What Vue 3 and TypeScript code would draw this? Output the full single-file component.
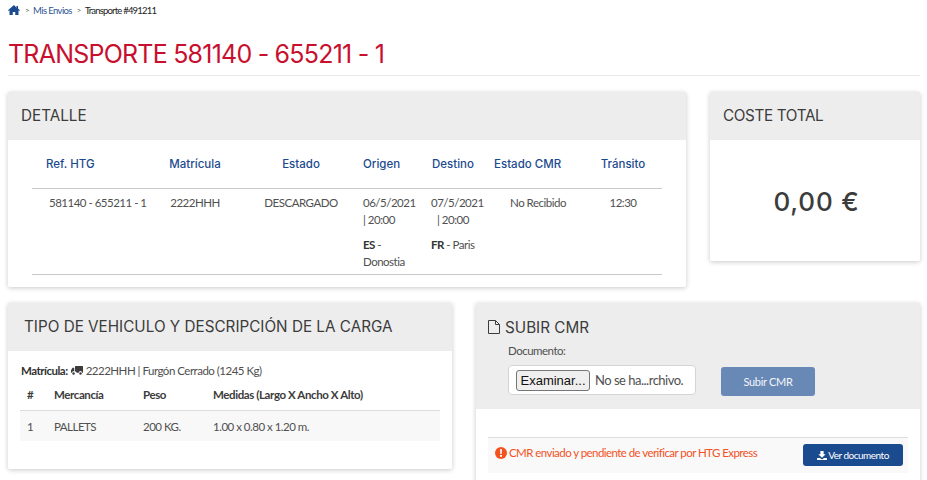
<template>
  <div class="page">
    <nav class="crumbs">
      <svg class="home" viewBox="0 0 24 20" width="12" height="10"><path d="M12 0 0 10.5l1.3 1.5L3 10.6V20h6.5v-6h5v6H21v-9.4l1.7 1.4 1.3-1.5-4-3.500V2h-3v3.400z" fill="#1b4b8f"/></svg>
      <span class="sep">&gt;</span>
      <a class="crumb-link">Mis Envios</a>
      <span class="sep">&gt;</span>
      <span class="crumb-current">Transporte #491211</span>
    </nav>

    <h1 class="title">TRANSPORTE 581140 - 655211 - 1</h1>

    <div class="row row-top">
      <section class="card">
        <header class="card-head"><h2>DETALLE</h2></header>
        <div class="detail-body">
          <table class="detail">
            <colgroup>
              <col v-for="w in detailCols" :key="w" :style="{ width: w + 'px' }" />
            </colgroup>
            <thead>
              <tr>
                <th class="th-ref">Ref. HTG</th>
                <th>Matrícula</th>
                <th>Estado</th>
                <th class="th-origin">Origen</th>
                <th class="th-dest">Destino</th>
                <th class="th-cmr">Estado CMR</th>
                <th>Tránsito</th>
              </tr>
            </thead>
            <tbody>
              <tr>
                <td class="td-ref">581140 - 655211 - 1</td>
                <td>2222HHH</td>
                <td>DESCARGADO</td>
                <td class="td-place">
                  <div>06/5/2021</div>
                  <div>| 20:00</div>
                  <div class="place"><b>ES</b> -<br />Donostia</div>
                </td>
                <td class="td-place td-dest">
                  <div>07/5/2021</div>
                  <div class="time-dest">| 20:00</div>
                  <div class="place"><b>FR</b> - Paris</div>
                </td>
                <td>No Recibido</td>
                <td>12:30</td>
              </tr>
            </tbody>
          </table>
        </div>
      </section>

      <section class="card card-total">
        <header class="card-head head-total"><h2>COSTE TOTAL</h2></header>
        <div class="total">0,00 €</div>
      </section>
    </div>

    <div class="row row-bottom">
      <section class="card card-cargo">
        <header class="card-head head-wide"><h2>TIPO DE VEHICULO Y DESCRIPCIÓN DE LA CARGA</h2></header>
        <div class="cargo-body">
          <p class="vehicle">
            <b>Matrícula:</b>
            <svg class="truck" viewBox="0 0 24 18" width="12" height="9"><path d="M9 0h14a1 1 0 0 1 1 1v12.500h-1.600a3.400 3.400 0 0 0-6.800 0h-4.200A3.400 3.400 0 0 0 8 11V1a1 1 0 0 1 1-1zM6.500 3.500V11a3.400 3.400 0 0 0-5 2.500H0V8.500l3-5z" fill="#3c3c3c"/><circle cx="5" cy="15" r="2.500" fill="#3c3c3c"/><circle cx="19" cy="15" r="2.500" fill="#3c3c3c"/></svg>
            <span>2222HHH | Furgón Cerrado (1245 Kg)</span>
          </p>
          <table class="cargo">
            <colgroup>
              <col v-for="w in cargoCols" :key="w" :style="{ width: w + 'px' }" />
            </colgroup>
            <thead>
              <tr><th>#</th><th>Mercancía</th><th>Peso</th><th>Medidas (Largo X Ancho X Alto)</th></tr>
            </thead>
            <tbody>
              <tr><td>1</td><td>PALLETS</td><td>200 KG.</td><td>1.00 x 0.80 x 1.20 m.</td></tr>
            </tbody>
          </table>
        </div>
      </section>

      <section class="card card-upload">
        <header class="upload-head">
          <h2>
            <svg class="file" viewBox="0 0 12 14" width="12" height="14"><path d="M.5.5h7l4 4v9H.5zM7.500.5v4h4" fill="none" stroke="#3c3c3c" stroke-width="1"/></svg>
            SUBIR CMR
          </h2>
          <label class="doc-label">Documento:</label>
          <div class="upload-row">
            <div class="file-box">
              <button class="browse" type="button">Examinar...</button>
              <span class="file-name">No se ha...rchivo.</span>
            </div>
            <button class="submit" type="button">Subir CMR</button>
          </div>
        </header>
        <div class="upload-body">
          <div class="status">
            <span class="status-text">
              <svg class="alert" viewBox="0 0 12 12" width="12" height="12"><circle cx="6" cy="6" r="6" fill="#f4511e"/><path d="M5 2.300h2l-.3 4.700H5.300zM5 8h2v1.800H5z" fill="#fff"/></svg>
              CMR enviado y pendiente de verificar por HTG Express
            </span>
            <button class="view" type="button">
              <svg viewBox="0 0 12 11" width="10" height="9"><path d="M4 0h4v4h2.500L6 8.200 1.500 4H4zM0 8.500h3.500L6 10.500l2.500-2H12V11H0z" fill="#fff"/></svg>
              Ver documento
            </button>
          </div>
        </div>
      </section>
    </div>
  </div>
</template>

<script setup lang="ts">
// anchos de columna de las dos tablas
const detailCols: number[] = [110, 106, 106, 69, 69, 92, 78];
const cargoCols: number[] = [27, 89, 70, 234];
</script>

<style>
html,
body {
  overflow: hidden;
  background: #fff;
}
</style>

<style scoped>
.page {
  width: 912px;
  padding: 0 7px 0 8px;
  font-family: "Lato", "Liberation Sans", sans-serif;
  font-size: 11.500px;
  letter-spacing: -0.5px;
  color: #505050;
}

.crumbs {
  display: flex;
  align-items: center;
  height: 20px;
  font-size: 9.500px;
  letter-spacing: -0.6px;
  color: #222;
}

.home {
  margin-right: 5px;
}

.sep {
  margin: 0 4px 0 0;
  font-size: 8px;
  color: #555;
}

.crumb-link {
  margin-right: 5px;
  color: #2f5597;
}

.crumb-current {
  letter-spacing: -0.8px;
}

.title {
  margin: 21px 0 0;
  padding-bottom: 7px;
  border-bottom: 1px solid #e8e8e8;
  font-family: "Inter", "Liberation Sans", sans-serif;
  font-size: 25px;
  line-height: 27px;
  font-weight: 400;
  letter-spacing: -0.78px;
  color: #c8102e;
}

.row {
  display: grid;
  column-gap: 24px;
  align-items: start;
}

.row-top {
  grid-template-columns: 678px 210px;
  margin-top: 16px;
}

.row-bottom {
  grid-template-columns: 444px 444px;
  margin-top: 16px;
}

.card {
  background: #fff;
  box-shadow: 0 1px 5px rgba(0, 0, 0, 0.22);
  border-radius: 2px;
}

.card-head {
  display: flex;
  align-items: center;
  height: 48px;
  box-sizing: border-box;
  padding: 0 13px 1px;
  background: #ededed;
}

.head-wide {
  padding: 0 16px 1px;
}

h2 {
  margin: 0;
  font-family: "Inter", "Liberation Sans", sans-serif;
  font-size: 15.250px;
  font-weight: 400;
  letter-spacing: 0;
  color: #3c3c3c;
}

.head-total h2 {
  letter-spacing: -0.35px;
}

.detail-body {
  padding: 0 24px 12px;
}

table {
  border-collapse: collapse;
  table-layout: fixed;
}

.detail {
  width: 630px;
}

.detail th {
  height: 48px;
  padding: 0;
  font-family: "Inter", "Liberation Sans", sans-serif;
  font-size: 11.500px;
  font-weight: 500;
  letter-spacing: 0;
  color: #1b4b8f;
  text-align: center;
  border-bottom: 1px solid #c9c9c9;
}

.detail .th-ref {
  padding-left: 14px;
  text-align: left;
}

.detail .th-origin {
  padding-left: 9px;
  text-align: left;
}

.detail .th-dest {
  padding-left: 9px;
  text-align: left;
}

.detail .th-cmr {
  padding-left: 2px;
  text-align: left;
}

.detail td {
  height: 80px;
  padding: 5px 0 0;
  line-height: 17px;
  text-align: center;
  vertical-align: top;
  border-bottom: 1px solid #c9c9c9;
}

.detail .td-ref {
  padding-left: 17px;
  text-align: left;
  white-space: nowrap;
}

.detail .td-place {
  padding-left: 9px;
  text-align: left;
}

.detail .td-dest {
  padding-left: 8px;
}

.time-dest {
  padding-left: 6px;
}

.place {
  margin-top: 8px;
}

.place b {
  color: #333;
}

.card-total {
  height: 169px;
}

.total {
  display: flex;
  justify-content: center;
  padding: 48px 0 0 3px;
  font-family: "Inter", "Liberation Sans", sans-serif;
  font-size: 26px;
  line-height: 28px;
  font-weight: 500;
  letter-spacing: 0.8px;
  color: #3c3c3c;
}

.card-cargo {
  height: 166px;
}

.cargo-body {
  padding: 11px 12px 0;
}

.vehicle {
  display: flex;
  align-items: center;
  gap: 3px;
  margin: 0;
  padding-left: 1px;
  height: 16px;
  white-space: pre;
}

.vehicle b {
  color: #333;
}

.cargo {
  width: 420px;
}

.cargo th {
  height: 32px;
  padding: 0 0 0 7px;
  font-weight: 700;
  letter-spacing: -0.4px;
  text-align: left;
  color: #3c3c3c;
  border-bottom: 1px solid #dcdcdc;
}

.cargo td {
  height: 30px;
  padding: 0 0 0 7px;
  background: #f8f8f8;
}

.card-upload {
  min-height: 190px;
}

.upload-head {
  height: 106px;
  box-sizing: border-box;
  padding: 14px 12px 0;
  background: #ededed;
}

.upload-head h2 {
  display: flex;
  align-items: center;
  gap: 5px;
  height: 20px;
}

.doc-label {
  display: block;
  margin: 6px 0 0 20px;
  line-height: 16px;
}

.upload-row {
  display: flex;
  align-items: flex-start;
  margin: 6px 0 0 20px;
}

.file-box {
  display: flex;
  align-items: center;
  width: 188px;
  height: 30px;
  box-sizing: border-box;
  padding-left: 7px;
  background: #fff;
  border: 1px solid #d4d4d4;
  border-radius: 4px;
  font-size: 13px;
}

.browse {
  width: 74px;
  height: 21px;
  padding: 0;
  background: #efefef;
  border: 1px solid #767676;
  border-radius: 3px;
  font-family: "Liberation Sans", sans-serif;
  font-size: 13px;
  color: #111;
}

.file-name {
  margin-left: 5px;
  white-space: nowrap;
}

.submit {
  width: 94px;
  height: 29px;
  margin: 2px 0 0 25px;
  padding: 0;
  background: #6888b5;
  border: 0;
  border-radius: 3px;
  font-family: inherit;
  font-size: 11px;
  letter-spacing: -0.3px;
  color: #f4f6fa;
}

.upload-body {
  padding: 28px 12px 0;
}

.status {
  display: flex;
  align-items: flex-start;
  justify-content: space-between;
  height: 36px;
  box-sizing: border-box;
  padding: 6px 5px 0 7px;
  background: #f9f9f9;
  border-top: 1px solid #dddddd;
}

.status-text {
  display: flex;
  align-items: center;
  gap: 2px;
  height: 17px;
  letter-spacing: -0.56px;
  color: #f4511e;
}

.view {
  display: flex;
  align-items: center;
  justify-content: center;
  gap: 1px;
  width: 100px;
  height: 22px;
  padding: 0;
  background: #1b4b8f;
  border: 0;
  border-radius: 3px;
  font-family: inherit;
  font-size: 10px;
  letter-spacing: -0.5px;
  color: #fff;
}
</style>
